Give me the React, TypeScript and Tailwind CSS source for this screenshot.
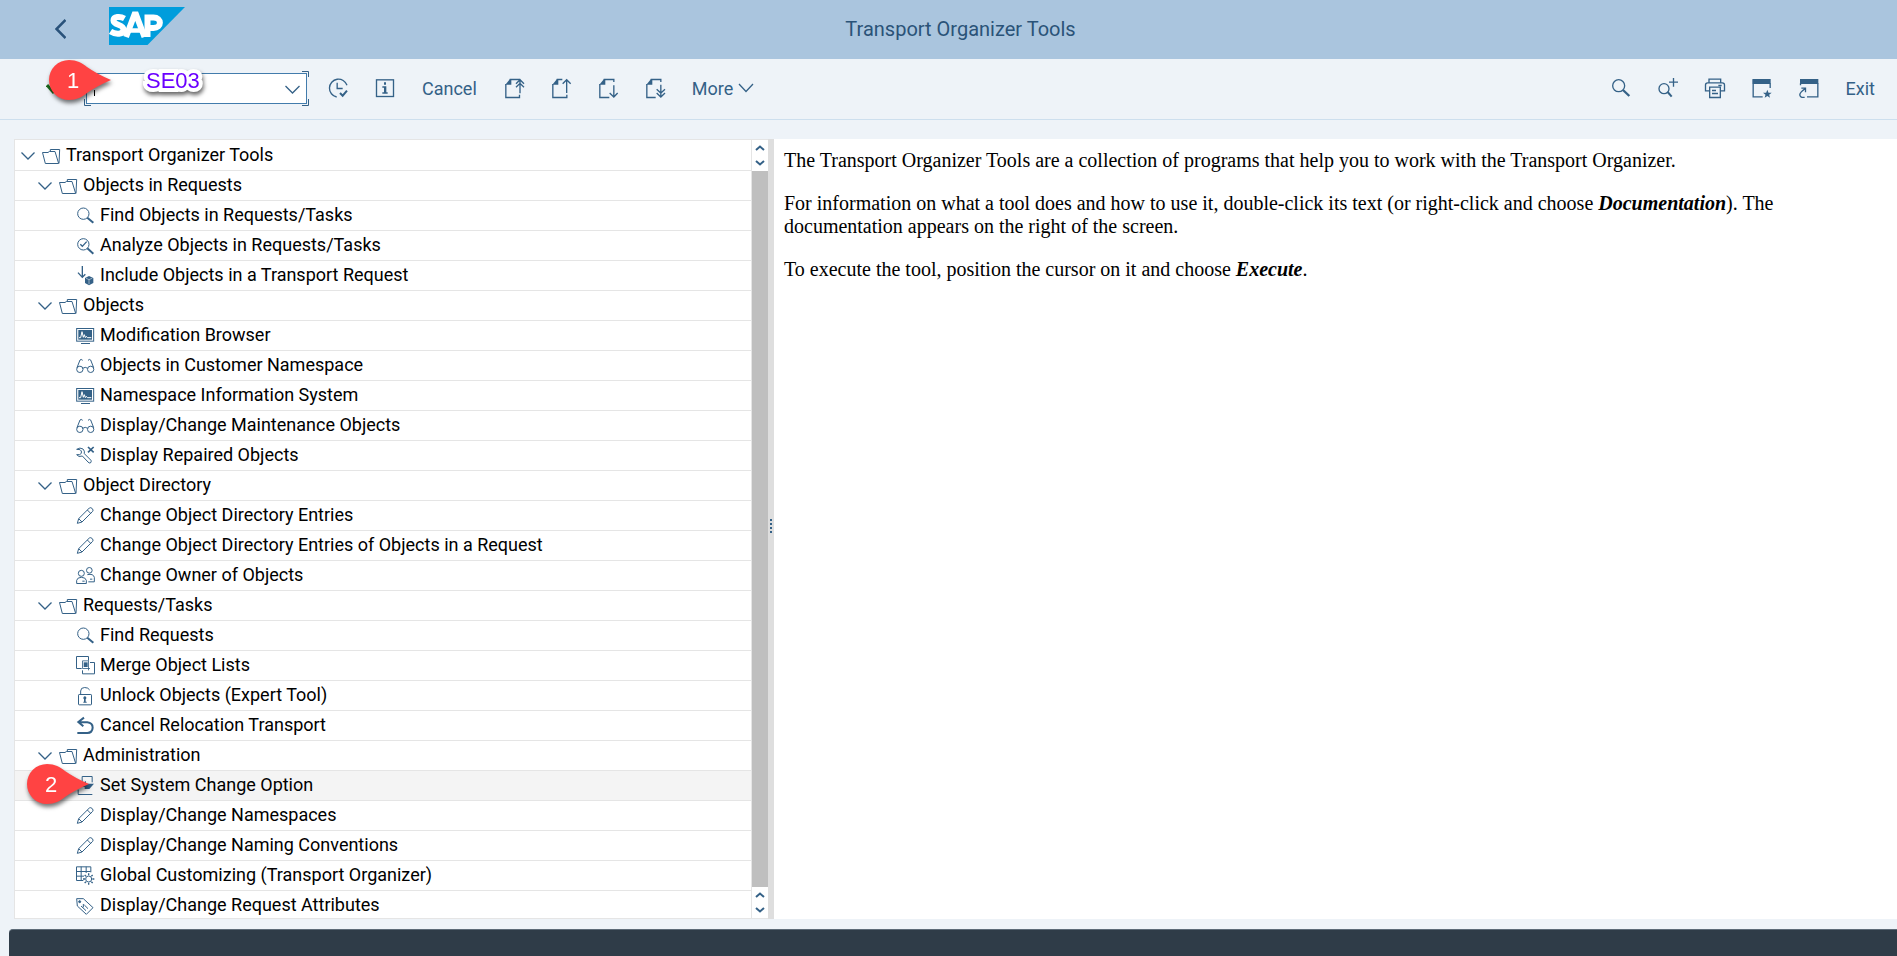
import React from "react";

const ink = "#346187";

type IconName =
  | "folder" | "search" | "analyze" | "include" | "monitor" | "glasses" | "repair"
  | "pencil" | "users" | "merge" | "unlock" | "undo" | "system" | "grid" | "tag";

const glyphs: Record<IconName, React.ReactNode> = {
  folder: (
    <>
      <path d="M1.500 22.500H18L22 19.500H39L50 55.500H10Z" />
      <path d="M25 19V13.500H53L51 55" />
    </>
  ),
  search: (
    <>
      <circle cx="22" cy="26" r="17" />
      <path d="M34 38L52 53" strokeWidth="6" />
    </>
  ),
  analyze: (
    <>
      <circle cx="22" cy="28" r="17" />
      <path d="M34 40L52 56" strokeWidth="6" />
      <path d="M13 28L19 34L32 20" strokeWidth="4" />
    </>
  ),
  include: (
    <>
      <path d="M19 3V36M6 23L19 37L28 28" strokeWidth="4" />
      <path d="M39 33L52 39V54L39 61L27 54V39Z" fill={ink} stroke="none" />
      <path d="M30 39.500L39 44L49 39.500M39 44V58" stroke="#fff" strokeWidth="1.500" />
    </>
  ),
  monitor: (
    <>
      <rect x="2" y="10.500" width="51" height="38" />
      <rect x="7" y="15" width="41" height="29" fill={ink} stroke="none" />
      <path d="M9 38H14L18 20L22 37L25 29L28 38L31 34L34 38H46" stroke="#fff" strokeWidth="3" />
      <path d="M15 55.500H42" />
    </>
  ),
  glasses: (
    <>
      <circle cx="11.500" cy="43" r="9.500" />
      <circle cx="44" cy="43" r="9.500" />
      <path d="M20 40Q28 34 35 40M3 38L12 15Q15 11 20 16M53 38L44 15Q41 11 36 16" />
    </>
  ),
  repair: (
    <>
      <path d="M2 13Q12 6 21 12Q27 18 25 26L45 46Q47 51 43 54Q39 55 36 51L19 33Q8 38 2 29H11L16 25V18L12 14Z" />
      <path d="M36 6L53 22M53 6L36 22" strokeWidth="5" />
    </>
  ),
  pencil: (
    <>
      <path d="M4 55L8 41L40 9Q44 6 49 11Q53 16 50 19L18 51Z" />
      <path d="M34 15L44 25M8 41L18 51" />
    </>
  ),
  users: (
    <>
      <circle cx="16" cy="25" r="9" />
      <path d="M2 55.500V46Q4 37 16 37Q29 37 31 46V55.500Z M19 48.500H26" />
      <circle cx="40" cy="16" r="8.500" />
      <path d="M34 29Q52 25 55 37V50.500H37M42 42.500H49" />
    </>
  ),
  merge: (
    <>
      <path d="M17 40.500H1.500V4.500H37.500V17" />
      <path d="M42 22.500H55.500V56.500H19.500V46" />
      <path d="M19.500 17.500H37.500V46M42 40.500H19.500V17.500" strokeWidth="2.500" />
      <rect x="23" y="22" width="12" height="14" fill={ink} stroke="none" />
    </>
  ),
  unlock: (
    <>
      <rect x="7.500" y="28.500" width="39" height="31" rx="2" />
      <path d="M14 28V18Q14 7.500 26 7.500Q37 7.500 41 15" />
      <path d="M27 34A5 5 0 0 1 29 43V50H32V53H22V50H24V43A5 5 0 0 1 27 34Z" fill={ink} stroke="none" />
    </>
  ),
  undo: <path d="M24 8L7 21L22 34M7 21.500H34Q50 23 50 38Q49 54 34 54H4" strokeWidth="6" />,
  system: (
    <>
      <path d="M18.500 20V4.500H48.500V22M6.500 44V58.500H49" />
      <path d="M5 32L30 18V26H54L40 42H26V36Z" fill={ink} stroke="none" />
    </>
  ),
  grid: (
    <>
      <path d="M22 46.500H1.500V5.500H44.500V22M1.500 19.500H44M1.500 33.500H24M15.500 5V46M30.500 5V24" />
      <circle cx="38" cy="42" r="9" />
      <path d="M38 25V31M38 53V59M21 42H27M49 42H55M26 30L30 34M46 50L50 54M50 30L46 34M30 50L26 54" strokeWidth="4" />
    </>
  ),
  tag: (
    <>
      <path d="M2 8H22L51 35L31 55L4 30Z" />
      <circle cx="11" cy="17" r="3" fill={ink} />
      <path d="M15 30L30 44M22 24V34M25 27L36 38" />
    </>
  ),
};

function TreeIcon({ name }: { name: IconName }) {
  return (
    <svg viewBox="0 0 54 63" className="h-[21px] w-[18px] shrink-0 overflow-visible" fill="none" stroke={ink} strokeWidth="3" aria-hidden="true">
      {glyphs[name]}
    </svg>
  );
}

type Item = { level: 1 | 2 | 3; icon: IconName; text: string; marked?: boolean };

const items: Item[] = [
  { level: 1, icon: "folder", text: "Transport Organizer Tools" },
  { level: 2, icon: "folder", text: "Objects in Requests" },
  { level: 3, icon: "search", text: "Find Objects in Requests/Tasks" },
  { level: 3, icon: "analyze", text: "Analyze Objects in Requests/Tasks" },
  { level: 3, icon: "include", text: "Include Objects in a Transport Request" },
  { level: 2, icon: "folder", text: "Objects" },
  { level: 3, icon: "monitor", text: "Modification Browser" },
  { level: 3, icon: "glasses", text: "Objects in Customer Namespace" },
  { level: 3, icon: "monitor", text: "Namespace Information System" },
  { level: 3, icon: "glasses", text: "Display/Change Maintenance Objects" },
  { level: 3, icon: "repair", text: "Display Repaired Objects" },
  { level: 2, icon: "folder", text: "Object Directory" },
  { level: 3, icon: "pencil", text: "Change Object Directory Entries" },
  { level: 3, icon: "pencil", text: "Change Object Directory Entries of Objects in a Request" },
  { level: 3, icon: "users", text: "Change Owner of Objects" },
  { level: 2, icon: "folder", text: "Requests/Tasks" },
  { level: 3, icon: "search", text: "Find Requests" },
  { level: 3, icon: "merge", text: "Merge Object Lists" },
  { level: 3, icon: "unlock", text: "Unlock Objects (Expert Tool)" },
  { level: 3, icon: "undo", text: "Cancel Relocation Transport" },
  { level: 2, icon: "folder", text: "Administration" },
  { level: 3, icon: "system", text: "Set System Change Option", marked: true },
  { level: 3, icon: "pencil", text: "Display/Change Namespaces" },
  { level: 3, icon: "pencil", text: "Display/Change Naming Conventions" },
  { level: 3, icon: "grid", text: "Global Customizing (Transport Organizer)" },
  { level: 3, icon: "tag", text: "Display/Change Request Attributes" },
];

const indent = { 1: "pl-[6px]", 2: "pl-[23px]", 3: "pl-[61px]" };

function Marker({ label, className }: { label: string; className: string }) {
  return (
    <div className={`pointer-events-none absolute z-10 h-10 w-[62px] drop-shadow-[1px_3px_2px_rgba(0,0,0,0.55)] ${className}`}>
      <svg viewBox="0 0 62 40" className="absolute inset-0 h-full w-full" aria-hidden="true">
        <path d="M20 0C28 0 33 3 38 7Q48 14 62 20Q48 26 38 33C33 37 28 40 20 40A20 20 0 0 1 20 0Z" fill="#ff4343" />
      </svg>
      <span className="relative flex h-10 w-[48px] items-center justify-center font-['Liberation_Sans',sans-serif] text-[22px] text-white">{label}</span>
    </div>
  );
}

function ToolButton({ label, children }: { label: string; children: React.ReactNode }) {
  return (
    <button type="button" aria-label={label} className="h-5 w-5 shrink-0">
      <svg viewBox="0 0 60 60" className="h-5 w-5 overflow-visible" fill="none" stroke={ink} strokeWidth="4" aria-hidden="true">
        {children}
      </svg>
    </button>
  );
}

const docPath = "M17 4.500H46.500V10M5.500 18V58.500H46.500V50";
const docFold = "M4 20L18 3H22V20Z";

function SmallArrow({ up }: { up?: boolean }) {
  return (
    <button type="button" aria-label={up ? "Scroll up" : "Scroll down"} className="flex h-[15px] w-full items-center justify-center">
      <svg viewBox="0 0 10 6" className="h-[6px] w-[10px]" fill="none" stroke={ink} strokeWidth="2" aria-hidden="true">
        <path d={up ? "M1 5L5 1.500L9 5" : "M1 1L5 4.500L9 1"} />
      </svg>
    </button>
  );
}

export default function App() {
  return (
    <div className="flex h-screen flex-col overflow-hidden bg-[#eef3f8] font-[Roboto,sans-serif] text-[18px] text-black">
      <header className="grid h-[59px] shrink-0 grid-cols-[1fr_auto_1fr] items-center bg-[#aac5de] pl-6">
        <div className="flex h-full items-start gap-[43px] pt-[7px] pl-[31px]">
          <button type="button" aria-label="Back" className="mt-3">
            <svg viewBox="0 0 11 20" className="h-5 w-[11px]" fill="none" stroke="#29527a" strokeWidth="2.500" aria-hidden="true">
              <path d="M10.500 1L1.500 10L10.500 19" />
            </svg>
          </button>
          <svg viewBox="0 0 76 38" className="h-[38px] w-[76px]" role="img" aria-label="SAP">
            <path d="M0 0H76L38.500 38H0Z" fill="#009ddc" />
            <g fill="none" stroke="#fff" strokeWidth="6">
              <path d="M15.500 11.500C11 9 4.500 9.500 4.500 13.500C4.500 18.500 14.500 17 14.500 22.500C14.500 27.500 7 28 1.500 24.500" />
              <path d="M17 30L25.500 7.500H27L35.500 30" />
              <path d="M21 23.500H32" strokeWidth="4.500" />
              <path d="M38.500 30V10.500H44.500C53 10.500 53 21 44.500 21H38.500" />
            </g>
          </svg>
        </div>
        <h1 className="pb-[2px] text-[20px] leading-6 text-[#2a5378]">Transport Organizer Tools</h1>
      </header>

      <div className="relative flex h-[61px] shrink-0 items-center justify-between border-b border-[#cddfee] pr-[22px] pb-[2px] pl-[46px] text-[#346187]">
        <div className="flex items-center gap-[27px]">
          <div className="flex items-center gap-[30px]">
            <button type="button" aria-label="Enter" className="h-3 w-2">
              <svg viewBox="0 0 8 12" className="h-3 w-2" fill="none" stroke="#1c6b1c" strokeWidth="3" aria-hidden="true">
                <path d="M1 3L8 11" />
              </svg>
            </button>
            <div className="relative flex h-[35px] w-[225px] items-center p-[2px]">
              <input type="text" aria-label="Command" className="h-[31px] w-full border border-[#427cac] bg-white pr-8 pl-2 outline-none" />
              <svg viewBox="0 0 225 35" className="pointer-events-none absolute inset-0 h-[35px] w-[225px]" fill="none" stroke={ink} aria-hidden="true">
                <path d="M218 0.500H224.500V6M218 34.500H224.500V28M7 34.500H0.500V28M0.500 6V0.500H7" />
                <path d="M10.500 19V25" stroke="#000" />
                <path d="M201.500 15L208.500 22L215.500 15" strokeWidth="1.300" />
              </svg>
            </div>
          </div>
          <div className="-ml-2 flex items-center gap-[27px]">
            <ToolButton label="Execute">
              <path d="M57 22A27 27 0 1 0 26 57" />
              <path d="M27.500 14V31.500H44" />
              <path d="M36 45L44 53L57 38" strokeWidth="6" />
            </ToolButton>
            <ToolButton label="Information">
              <rect x="4.500" y="5.500" width="51" height="50" />
              <path d="M27 13H33V20H27ZM22 25H34V43H38V47H22V43H27V29H22Z" fill={ink} stroke="none" />
            </ToolButton>
            <button type="button">Cancel</button>
            <ToolButton label="First page">
              <path d={docPath} />
              <path d={docFold} fill={ink} stroke="none" />
              <path d="M48 46V6M36 17L48 5L60 17M36 28L48 16L60 28" />
            </ToolButton>
            <ToolButton label="Previous page">
              <path d="M17 4.500H34M5.500 18V58.500H47.500V50" />
              <path d={docFold} fill={ink} stroke="none" />
              <path d="M47 45V5M35 17L47 5L59 17" />
            </ToolButton>
            <ToolButton label="Next page">
              <path d="M17 4.500H47.500V12M5.500 18V58.500H34" />
              <path d={docFold} fill={ink} stroke="none" />
              <path d="M47.500 22V57M35 45L47.500 57L59 45" />
            </ToolButton>
            <ToolButton label="Last page">
              <path d="M17 4.500H47.500V12M5.500 18V58.500H32" />
              <path d={docFold} fill={ink} stroke="none" />
              <path d="M47.500 20V57M35 34L47.500 45L60 34M35 45L47.500 57L60 45" />
            </ToolButton>
            <button type="button" className="flex items-center gap-[5px]">
              More
              <svg viewBox="0 0 16 10" className="h-[10px] w-4" fill="none" stroke={ink} strokeWidth="1.300" aria-hidden="true">
                <path d="M1 1L8 8.500L15 1" />
              </svg>
            </button>
          </div>
        </div>
        <div className="flex items-center gap-[27px]">
          <ToolButton label="Find">
            <circle cx="23" cy="23" r="18" />
            <path d="M36 36L55 54" strokeWidth="7" />
          </ToolButton>
          <ToolButton label="Find next">
            <circle cx="18" cy="32" r="15" />
            <path d="M29 42L41 56" strokeWidth="6" />
            <path d="M46.500 0V26M33 12.500H60" />
          </ToolButton>
          <ToolButton label="Print">
            <path d="M12 14V3.500H47V14M13 38.500H1.500V21Q1.500 14.500 8 14.500H52Q58.500 14.500 58.500 21V38.500H47M40 22.500H50" />
            <path d="M14 27.500H46V58.500H14ZM21 37.500H33M21 46.500H39" />
          </ToolButton>
          <ToolButton label="Create favorite">
            <path d="M3.500 3.500V56.500H32M54.500 16V30" />
            <path d="M2 3H56V18H2Z" fill={ink} stroke="none" />
            <path d="M46 35L49.500 44H59L51.500 50L54 59L46 54L38 59L40.500 50L33 44H42.500Z" fill={ink} stroke="none" />
          </ToolButton>
          <ToolButton label="Create shortcut">
            <path d="M4.500 16V22M24 56.500H56.500V16" />
            <path d="M3 3H58V18H3Z" fill={ink} stroke="none" />
            <path d="M17 58H9Q2 56 2.500 49Q3 43 18 32M7 30.500H19.500V43" />
          </ToolButton>
          <button type="button">Exit</button>
        </div>
        <Marker label="1" className="top-px left-[49px]" />
        <span className="pointer-events-none absolute top-[8px] left-[146px] font-['Liberation_Sans',sans-serif] text-[22px] leading-7 text-[#6a00ff] drop-shadow-[1px_3px_2px_rgba(0,0,0,0.6)] [-webkit-text-stroke:8px_white] [paint-order:stroke_fill] [stroke-linejoin:round]">
          SE03
        </span>
      </div>

      <main className="flex min-h-0 flex-1 pt-[19px] pb-[10px] pl-[14px]">
        <nav aria-label="Tools" className="flex w-[754px] max-w-[50%] shrink-0 border-y border-l border-[#e5e5e5] bg-white">
          <ul className="relative min-w-0 flex-1 pt-px">
            {items.map((item, i) => (
              <li key={i} className={item.marked ? "relative bg-[#f4f4f4]" : i === items.length - 1 ? "h-[27px]" : ""}>
                <button
                  type="button"
                  className={`flex h-[30px] w-full items-center text-left leading-6 whitespace-nowrap ${i === items.length - 1 ? "" : "border-b border-[#e5e5e5]"} ${indent[item.level]}`}
                >
                  {item.level < 3 && (
                    <svg viewBox="0 0 14 8" className="mr-[7px] h-2 w-[14px] shrink-0" fill="none" stroke={ink} strokeWidth="1.300" aria-hidden="true">
                      <path d="M0.500 0.500L7 7L13.500 0.500" />
                    </svg>
                  )}
                  <TreeIcon name={item.icon} />
                  <span className="ml-[6px] pb-[2px]">{item.text}</span>
                </button>
                {item.marked && <Marker label="2" className="-top-[7px] left-3" />}
              </li>
            ))}
          </ul>
          <div className="flex w-[17px] shrink-0 flex-col border-l border-[#e5e5e5]">
            <div className="h-[31px]"><SmallArrow up /><SmallArrow /></div>
            <div className="flex-1 bg-[#bfbfbf]" />
            <div className="h-[31px]"><SmallArrow up /><SmallArrow /></div>
          </div>
        </nav>
        <div role="separator" aria-orientation="vertical" className="flex w-[6px] shrink-0 flex-col items-center justify-center gap-[2px] bg-[#dedede] pb-[6px]">
          <span className="h-[2px] w-[2px] bg-[#346187]" />
          <span className="h-[2px] w-[2px] bg-[#346187]" />
          <span className="h-[2px] w-[2px] bg-[#346187]" />
          <span className="h-[2px] w-[2px] bg-[#346187]" />
        </div>
        <article className="flex min-w-0 flex-1 flex-col gap-5 bg-white pt-[10px] pr-6 pl-[10px] font-['Liberation_Serif',serif] text-[20px] leading-[23px]">
          <p>The Transport Organizer Tools are a collection of programs that help you to work with the Transport Organizer.</p>
          <p>
            For information on what a tool does and how to use it, double-click its text (or right-click and choose{" "}
            <strong><em>Documentation</em></strong>). The documentation appears on the right of the screen.
          </p>
          <p>
            To execute the tool, position the cursor on it and choose <strong><em>Execute</em></strong>.
          </p>
        </article>
      </main>

      <footer className="ml-[9px] h-[27px] shrink-0 rounded-tl-[4px] border-t border-[#5d6b78] bg-[#2f3c48]" />
    </div>
  );
}
